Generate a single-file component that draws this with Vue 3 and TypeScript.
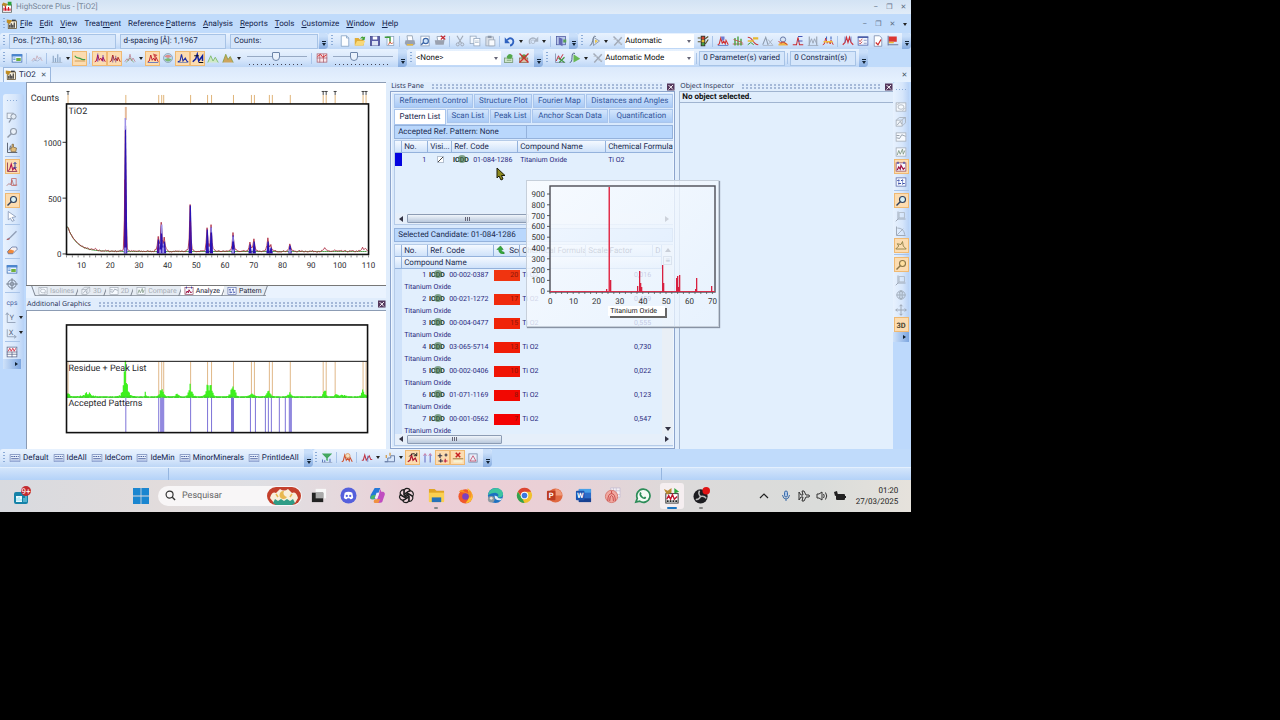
<script setup lang="ts">
import { h, ref, type FunctionalComponent } from 'vue'

const line = (d: string, c: string, w = 1) => `<path d="${d}" fill="none" stroke="${c}" stroke-width="${w}"/>`
const fill = (d: string, c: string) => `<path d="${d}" fill="${c}"/>`
const box = (x: number, y: number, w: number, hh: number, f: string, s = 'none') =>
  `<rect x="${x}" y="${y}" width="${w}" height="${hh}" fill="${f}" stroke="${s}"/>`
const dot = (x: number, y: number, r: number, f: string, s = 'none', w = 1) =>
  `<circle cx="${x}" cy="${y}" r="${r}" fill="${f}" stroke="${s}" stroke-width="${w}"/>`

const zig = 'M1 13L3 12L5 4L7 11L9 8L11 12L12 7L15 13'
const lens = (c: string, f: string) => dot(10, 6, 4, f, c, 1.5) + line('M7 9L2 14', c, 2)
const frame = (c: string) => box(1.5, 2.5, 13, 11, '#f6faff', c)

const icons: Record<string, string> = {
  app: box(2, 5, 12, 10, '#fff', '#555') + fill('M3 2L9 4L6 8L1 5Z', '#b98a2e') + fill('M9 1H14V6H9Z', '#28a23a') + line('M4 13V9M6 13V7M8 13V10M10 13V8M12 13V10', '#d01020', 1.5),
  doc: box(3, 4, 11, 10, '#f7efdc', '#5b4a28') + fill('M1 2L8 3L5 8L1 6Z', '#c08d24') + line('M5 13V9M7 13V7M9 13V9M11 13V6', '#333', 1.5) + line('M8 3H13', '#222', 1.5),
  window: box(1.5, 3.5, 13, 10, '#eaf4ff', '#3a6bb0') + box(1, 3, 14, 3, '#4a86d0') + fill('M7 8H13V12H7Z', '#6fb03c') + line('M3 8H6M3 10H6', '#4a86d0'),
  faint: line('M1 12L4 8L6 12L8 5L10 9L12 7L15 12', '#c7a5b0') + line('M2 13L5 11L9 12L14 8', '#9fb2d0'),
  bars: line('M3 14V5M6 14V8M9 14V3M12 14V7', '#8ba6c4', 1.5) + line('M1 14H15', '#a8b8cc'),
  bg: line('M1 5C4 10 7 7 9 9S13 10 15 10', '#3f9f45', 1.5) + line('M1 12H15', '#c48a3b'),
  peakA: line(zig, '#c01040', 1.3) + line('M5 2V13M12 4V13', '#5020b0'),
  peakB: line(zig, '#b02828', 1.3) + line('M5 6V14M9 5V14', '#704090'),
  peakC: line('M1 13L4 9L6 12L8 3L10 12L12 8L15 13', '#c08c9c', 1.2) + line('M3 14L8 8L13 14', '#79a36c'),
  peakD: line(zig, '#c02030', 1.3) + line('M1 14H15', '#4060c0') + fill('M8 2L14 4L10 8Z', '#d0504d'),
  globe: dot(8, 8, 6, '#b9dcef', '#8898b0') + fill('M3 6Q8 1 13 6L8 8Z', '#db8c8c') + fill('M3 10Q8 15 13 10L8 8Z', '#7fb877'),
  peakE: line('M1 13L4 12L6 3L8 12L11 8L13 12L15 13', '#2030a8', 1.5) + line('M1 14H15', '#6878b0'),
  peakF: line('M1 13L5 9L7 3L9 12L14 5V12', '#1020a0', 2) + line('M3 5H9M9 14H15', '#101010', 1.5),
  hillA: fill('M1 14L5 5L8 12L11 7L15 14Z', '#cfe9c4') + line('M1 14L5 5L8 12L11 7L15 14', '#6fb25c'),
  hillB: fill('M1 14L5 3L8 10L11 6L15 14Z', '#cda45c') + line('M1 14L5 3L8 10L11 6L15 14', '#7d9c3d'),
  grid: box(1.5, 2.5, 13, 11, '#fbe6ea', '#a86070') + line('M1 8H15M5 3V14M10 3V14', '#a86070') + line('M2 6L6 3L9 7L14 4', '#d02020', 1.2),
  new: fill('M3 1H10L13 4V15H3Z', '#fdfeff') + line('M3 1H10L13 4V15H3ZM10 1V4H13', '#7d9cc0'),
  open: fill('M1 4H6L8 6H13V14H1Z', '#e0ad38') + fill('M4 8H15L12 14H1Z', '#f8d878') + fill('M8 5Q11 0 13 3L15 2L14 7L10 6L12 4Z', '#45a235'),
  save: box(2, 2, 12, 12, '#5a5ea8', '#404488') + box(5, 2, 6, 4, '#fff') + box(4, 8, 8, 6, '#dde4f4'),
  import: box(4, 2, 9, 12, '#fff', '#86a0bd') + line('M1 3L8 3L8 9', '#3f9d39', 2) + line('M6 13L8 9L10 12L12 10', '#cf5a3c', 1.3),
  print: fill('M4 1H11L12 8H5Z', '#fdfdff') + line('M4 1H11L12 8H5Z', '#8795a8') + fill('M2 7H14L15 12L12 14H3L1 11Z', '#99a2b0') + fill('M4 12H12V14H4Z', '#e8b93c'),
  preview: box(2.5, 1.5, 11, 13, '#fff', '#8096b3') + dot(9, 8, 3.5, '#cfe5fb', '#3c66a6', 1.5) + line('M6 10L3 13', '#3c66a6', 2),
  printX: fill('M4 2H12L13 8H5Z', '#fff') + line('M4 2H12L13 8H5Z', '#8795a8') + fill('M1 7H14L13 13H2Z', '#9aa1af') + line('M9 1L15 6M15 1L9 6', '#c62832', 1.5),
  cut: line('M4 1L10 11M12 1L6 11', '#9fa8b6', 1.5) + dot(5, 12.5, 2, 'none', '#9fa8b6', 1.3) + dot(11, 12.5, 2, 'none', '#9fa8b6', 1.3),
  copy: box(1.5, 1.5, 8, 10, '#f4f8fd', '#8fa3bc') + box(6.5, 4.5, 8, 10, '#fff', '#8fa3bc') + line('M8 8H13M8 10H13', '#a9b9cc'),
  paste: box(2.5, 2.5, 10, 12, '#d9dee6', '#97a3b4') + box(5, 1, 5, 3, '#8c98a9') + box(6.5, 6.5, 8, 8, '#f8fafd', '#97a3b4'),
  undo: line('M4 7C8 2 14 5 12 11C11 13 9 14 8 14', '#2f62c0', 2.4) + fill('M1 3V11H8Z', '#2f62c0'),
  redo: line('M12 6C8 2 1 5 4 12', '#a9b4c4', 2) + dot(8, 9, 2.5, 'none', '#a9b4c4') + fill('M15 2V9H9Z', '#a9b4c4'),
  exit: box(2, 2, 12, 11, '#b9c8ea', '#4c58a0') + fill('M5 3L10 5V15L5 12Z', '#6369b3') + fill('M11 6H15V10H11Z', '#56a052'),
  run: line('M1 14Q4 14 5 7T9 2', '#68758a', 1.3) + line('M6 3V14L14 8Z', '#7b879c') + fill('M8 6L12 8L8 11Z', '#e8c54f'),
  runG: line('M1 14Q4 14 4 7T8 2', '#51618a', 1.3) + fill('M6 3L15 9L6 14Z', '#69b855'),
  cancel: line('M2 2L13 13M13 3L3 14', '#a3abb8', 2) + line('M2 6H7M8 11H14', '#c1c8d2'),
  traffic: box(5, 1, 6, 14, '#3c3c34') + dot(8, 4, 2, '#d84430') + dot(8, 8, 2, '#e8bc30') + dot(8, 12, 2, '#44a040') + line('M1 4H5M1 9H5M11 5L15 2M11 12L15 6', '#5a5228', 1.6),
  trA: line(zig, '#d03030', 1.4) + fill('M5 2H10V6L7 8Z', '#6f7cd0') + line('M1 14H15', '#5070c0'),
  trB: line('M1 12H15', '#cf3030') + line('M4 4V14M8 2V14M12 5V14', '#46a038', 1.8) + line('M2 6L14 10', '#d04040'),
  trC: line('M1 3Q5 3 8 8T15 13', '#c93636', 1.4) + fill('M1 7H9V9H1ZM8 3H15V6H8Z', '#e8b830') + line('M1 13L5 10L9 13', '#3f9d39', 1.3),
  trD: line('M1 13L5 3L8 13', '#8e9cae', 1.4) + line('M8 6L14 13M14 6L8 13', '#a8b2c0', 1.3) + line('M1 14H15', '#a8b2c0'),
  trE: fill('M2 12Q8 6 14 12V14H2Z', '#f0b548') + dot(8, 6, 3.5, '#d6e4f6', '#6576a5', 1.3) + line('M2 8L5 11L8 9L14 13', '#cc2c2c', 1.2),
  trF: line('M1 13H6L8 3L10 13H15', '#c92a30', 1.4) + line('M8 2H14M8 8H14', '#4659b8', 1.4),
  trG: line('M3 2V14M13 2V14', '#8e99a8', 1.3) + line('M3 12L6 5L8 11L10 5L13 12', '#99a4b4', 1.2) + line('M1 14H15', '#99a4b4'),
  trH: line(zig, '#d03434', 1.3) + fill('M2 8H14V10H2Z', '#f1bd3c') + line('M6 2V6M12 2V6', '#4468c0', 1.5),
  trI: line('M1 13L4 10L6 3L8 10L10 3L12 10L15 13', '#cf3038', 1.5) + line('M4 2V10M12 2V9', '#5a68b8'),
  list: box(1.5, 2.5, 13, 11, '#f2f6ff', '#4b5ea8') + box(1, 2, 14, 2, '#4b5ea8') + line('M3 7L4 9L7 5M3 11L4 12L7 9', '#c62c2c') + line('M9 7H13M9 11H13', '#7080b0'),
  report: fill('M3 1H10L13 4V15H3Z', '#fff') + line('M3 1H10L13 4V15H3Z', '#7284a8') + line('M5 10L8 13L12 6', '#cf2c2c', 1.6),
  flag: fill('M2 2H13V9H2Z', '#dc3530') + fill('M2 9H9V11H2Z', '#efba36') + line('M1 13H15M1.500 1V14', '#6f7ca0', 1.4),
  scanX: line('M2 2V14H15', '#7a86a0') + line('M3 12L6 5L8 10L12 3', '#c62e3c', 1.3) + line('M6 8L14 14M14 7L7 14', '#3f9440', 1.5),
  tree: box(2, 8, 11, 6, '#cfe6cb', '#6e936a') + fill('M5 6Q9 0 13 5L11 9H6Z', '#53a84a') + line('M5 11H11', '#6e936a'),
  treeX: box(2, 8, 11, 6, '#d8c0a8', '#8a6b50') + fill('M4 5Q8 1 12 5L10 9H5Z', '#62984a') + line('M2 2L14 14M14 2L2 14', '#cc3030', 1.8),
  zoomFit: box(1.5, 1.5, 8, 7, '#eef4fb', '#8a95a5') + dot(10, 6, 3.5, '#e4ecf5', '#8a95a5', 1.3) + line('M7 9L4 14', '#8a95a5', 1.8),
  zoomG: lens('#8d98a8', '#eaf1f9'),
  zoomB: lens('#2e3f5c', '#d8f0f4'),
  zoomO: lens('#8d7748', '#ffdf9e'),
  hand: line('M2 1V14H15', '#5c6678', 1.3) + line('M4 11L6 5L7 9', '#5c6678') + fill('M7 13L6 8L8 8V3H10V7L14 8L13 13Z', '#e2bc78') + line('M7 13L6 8L8 8V3H10V7L14 8L13 13Z', '#7c6540'),
  peakUp: line('M2 2V14H15', '#7b2048') + line('M3 13L5 11L7 4L9 12L11 9L14 13', '#b01050', 1.4) + line('M12 2V10M10 4L12 2L14 4M10 8L12 10L14 8', '#2030a0', 1.2),
  peakBox: line('M1 13L4 10L6 12L8 5L10 12L15 12', '#b07a80', 1.2) + box(7.5, 3.5, 6, 9, 'none', '#c46460'),
  pointer: fill('M3 2L13 9L8 10L11 14L8 15L6 11L3 13Z', '#fff') + line('M3 2L13 9L8 10L11 14L8 15L6 11L3 13Z', '#7c8fb0'),
  pencil: line('M2 14L6 11L14 3', '#92a0b8', 2) + line('M1 14L5 13', '#b04a4a', 1.3),
  eraser: fill('M2 10L8 4L14 4L15 7L9 13L3 13Z', '#f8f0f0') + fill('M2 10L5 7L11 9L9 13H3Z', '#ef8a3c') + line('M2 10L8 4H14L15 7L9 13H3Z', '#5c6e98'),
  target: dot(8, 8, 5.5, 'none', '#6d7888', 1.3) + dot(8, 8, 2.5, 'none', '#6d7888') + line('M8 0V16M0 8H16', '#6d7888'),
  cps: '<text x="8" y="11" text-anchor="middle" font-size="9" fill="#4760a0">cps</text>',
  yAxis: line('M3 2V14H14M1 4L3 1L5 4', '#8290a8') + '<text x="6" y="11" font-size="10" fill="#5c6a84">Y</text>',
  xAxis: line('M3 3V13H14M12 11L15 13L12 15', '#8290a8') + '<text x="5" y="11" font-size="10" fill="#5c6a84">X</text>',
  table: box(1.5, 1.5, 13, 13, '#fff', '#5a6488') + line('M1 8H15M1 11H15M8 8V15', '#5a6488') + line('M3 7L5 3L7 7L9 3L11 7L13 3', '#d03048', 1.2),
  iso: frame('#a0a8b2') + `<ellipse cx="8" cy="8" rx="4" ry="3" fill="none" stroke="#a0a8b2"/>` + line('M3 5L6 3M10 13L14 9', '#a0a8b2'),
  d3: box(1.5, 5.5, 8, 8, '#f1f5fa', '#a0a8b2') + line('M2 5L6 2H14V9L10 13M9 5L14 2', '#a0a8b2') + line('M3 12L7 7L9 11', '#8e98a6'),
  d2: frame('#a0a8b2') + line('M2 9L6 10L9 5L14 7M2 6H6', '#8e98a6', 1.2),
  compare: frame('#a0a8b2') + line('M3 12L5 6L7 11L10 4L11 11L13 6', '#8aa08e', 1.3),
  analyze: frame('#8d4058') + line('M3 12L5 8L7 11L8 6L11 11L13 9', '#a01040', 1.6) + line('M4 1V4M12 1V4', '#3440b0', 1.5),
  pattern: frame('#5968a8') + line('M3 6H6M8 6H11M4 10H8M10 10H13', '#3548a8', 1.6) + line('M5 4V12M10 4V12', '#7080c0'),
  axes3: line('M4 2V12H14M4 12L1 15', '#97a2b0', 1.2) + box(5.5, 3.5, 7, 7, 'none', '#a9b3bf'),
  axesC: line('M2 2V14H14', '#97a2b0', 1.2) + line('M3 4Q12 4 13 13M3 13L11 5', '#97a2b0'),
  star: line('M1 12L5 8L3 5L8 6L10 2L11 8L15 12H8Z', '#8f8046', 1.2),
  earth: dot(8, 8, 5.5, 'none', '#9aa5b2', 1.2) + `<ellipse cx="8" cy="8" rx="2.5" ry="5.5" fill="none" stroke="#9aa5b2"/>` + line('M2 8H14M8 2V14', '#9aa5b2'),
  move: line('M8 1V15M1 8H15M6 3L8 1L10 3M6 13L8 15L10 13M3 6L1 8L3 10M13 6L15 8L13 10', '#98a3b1', 1.2),
  txt3d: '<text x="8" y="12" text-anchor="middle" font-size="10" font-weight="bold" fill="#4c4630">3D</text>',
  batch: box(1.5, 3.5, 13, 9, '#e6effc', '#7488b8') + line('M3 6H5M6 6H8M9 6H11M12 6H13M3 9H13', '#4f64a0', 1.5) + box(2, 11, 12, 2, '#9db1dc'),
  filter: fill('M1 2H15L9 8V12L7 11V8Z', '#45a860') + line('M2 14V10M5 14V11M12 14V9', '#5b78b8', 1.4) + line('M1 14H15', '#9aa8c4'),
  match: line(zig, '#d0502c', 1.4) + dot(9, 5, 3, '#f3e0c0', '#d88a50'),
  redPk: line('M1 11H3L5 4L7 11L9 8L11 5L13 10H15', '#c03848', 1.4) + line('M9 5V13', '#5060b0'),
  steps: line('M1 13H5V8H9V5H14V13Z', '#6b7fa8', 1.3) + line('M3 4V8M8 1V5', '#d09030', 1.5),
  peakOn: line('M1 13L4 11L6 4L8 11L11 8L13 13', '#b01830', 1.6) + line('M3 6Q8 -1 13 5M13 1V5H9', '#202020', 1.3),
  twin: line('M4 3V14M11 3V14', '#7d88d0', 1.8) + line('M2 5L4 2L6 5M9 5L11 2L13 5', '#d078a0', 1.2),
  plusOn: line('M4 2V8M1 5H7M12 2V6M10 4H14M5 9V14M2 12H8', '#303048', 1.5) + line('M11 9V14M9 12H14', '#c02040', 1.5),
  xOn: line('M5 1L11 7M11 1L5 7', '#c82020', 2) + line('M1 9H15', '#806020') + fill('M2 11H14V14H2Z', '#f8f2d0'),
  shapes: box(2.5, 2.5, 11, 11, '#e7edf8', '#7180a0') + line('M4 12L8 5L12 12Z', '#c04060'),
  close: box(0, 1, 15, 14, '#54385c') + line('M3 4L12 13M12 4L3 13', '#f4e8f2', 2) + line('M6 8H10', '#fff', 2),
}

const Ico: FunctionalComponent<{ n: string }> = (p) =>
  h('svg', { class: 'ico', viewBox: '0 0 16 16', 'aria-hidden': 'true', innerHTML: icons[p.n] })
Ico.props = ['n']

/* Toolbar strings: "|" separator, "v" drop-down arrow, trailing "*" pressed state. */
const parse = (s: string) =>
  s.split(' ').map((t) => ({ kind: t === '|' ? 'sep' : t === 'v' ? 'drop' : 'btn', n: t.replace('*', ''), on: t.endsWith('*') }))

const fileTools = parse('new open save import | print preview printX | cut copy paste | undo v redo v | exit')
const treatTools = parse('trA trB trC trD trE trF trG trH | trI list report flag')
const viewTools = parse('window | faint | bars v bg* | peakA* peakB* peakC v peakD* globe peakE* peakF* hillA hillB v')
const searchTools = parse('filter | match | redPk v steps v peakOn* twin plusOn* xOn* shapes')
const leftTools = parse('zoomFit zoomG hand | peakUp* peakBox | zoomB* pointer | pencil eraser | window target | cps yAxis xAxis | table')
const rightTools = parse('iso d3 d2 compare analyze* pattern | zoomB* axes3 axesC star* | zoomO* axes3 earth move txt3d*')

const menus = [
  ['', 'F', 'ile'], ['', 'E', 'dit'], ['', 'V', 'iew'], ['Treat', 'm', 'ent'], ['Reference ', 'P', 'atterns'], ['', 'A', 'nalysis'],
  ['', 'R', 'eports'], ['', 'T', 'ools'], ['', 'C', 'ustomize'], ['', 'W', 'indow'], ['', 'H', 'elp'],
]
const batches = ['Default', 'IdeAll', 'IdeCom', 'IdeMin', 'MinorMinerals', 'PrintIdeAll']
const graphTabs = [
  { t: 'Isolines', i: 'iso', off: true }, { t: '3D', i: 'd3', off: true }, { t: '2D', i: 'd2', off: true },
  { t: 'Compare', i: 'compare', off: true }, { t: 'Analyze', i: 'analyze', off: false }, { t: 'Pattern', i: 'pattern', off: false },
]
const tabsTop = ['Refinement Control', 'Structure Plot', 'Fourier Map', 'Distances and Angles']
const tabsLow = ['Pattern List', 'Scan List', 'Peak List', 'Anchor Scan Data', 'Quantification']
const activeTab = ref('Pattern List')

const candidates = [
  { code: '00-002-0387', score: 20, scale: '0,016', c: '#f03410' },
  { code: '00-021-1272', score: 17, scale: '0,459', c: '#f02a0c' },
  { code: '00-004-0477', score: 15, scale: '0,555', c: '#f02408' },
  { code: '03-065-5714', score: 13, scale: '0,730', c: '#f01c06' },
  { code: '00-002-0406', score: 10, scale: '0,022', c: '#f01404' },
  { code: '01-071-1169', score: 8, scale: '0,123', c: '#f20802' },
  { code: '00-001-0562', score: 7, scale: '0,547', c: '#f40202' },
]

const peaks: [number, number][] = [
  [125, 126], [158, 12], [161, 26], [164, 10], [190, 46], [207, 22], [211, 24], [233, 16], [250, 7], [254, 10],
  [268, 10], [271, 4], [290, 6],
]
const marks = [67, 125, 158, 161, 163, 190, 207, 211, 233, 251, 254, 269, 272, 290, 323, 326, 335, 363, 366]
const arrows = [67, 323, 326, 335, 363, 366]
const minor = Array.from({ length: 53 }, (_, i) => 66 + (i * 303) / 52)
const patternLines = [125, 158, 160, 161, 162, 163, 190, 207, 211, 231, 232, 233, 250, 255, 265, 268, 271, 279, 285, 289, 290, 291]

let seed = 7
const rnd = () => (seed = (seed * 16807) % 2147483647) / 2147483647

const bumps = [...peaks, [95, 1], [325, 3], [335, 1], [363, 3], [366, 2]] as [number, number][]
const bell = (x: number, c: number, w: number) => Math.exp(-((x - c) ** 2) / w)
const base = (x: number) => 252 - 25 * Math.exp(-(x - 67) / 9)
const scan = Array.from({ length: 302 }, (_, i) => {
  const x = 67 + i
  const y = base(x) - bumps.reduce((s, [c, a]) => s + a * 0.94 * bell(x, c, 0.7) + Math.min(a, 10) * 0.3 * bell(x, c, 9), 0)
  return `${x} ${(y - rnd() * 1.6 + 0.6).toFixed(1)}`
})
const scanPath = 'M' + scan.join('L')
const basePath = 'M' + Array.from({ length: 151 }, (_, i) => `${67 + i * 2} ${base(67 + i * 2).toFixed(1)}`).join('L')

const residues: [number, number, number][] = [
  [68, 4, 4], [87, 4, 24], [125, 34, 1.5], [125, 12, 14], [145, 4, 0.5], [161, 8, 8], [177, 3, 5], [190, 22, 0.8], [190, 7, 8],
  [207, 12, 5], [211, 11, 5], [233, 10, 9], [252, 3, 10], [269, 7, 7], [290, 4, 6], [325, 7, 3], [337, 2, 6], [343, 2, 8], [363, 8, 3], [367, 3, 6],
]
const residuePath = Array.from({ length: 302 }, (_, i) => {
  const x = 67 + i
  const a = residues.reduce((s, [c, m, w]) => s + m * bell(x, c, w), 0.6)
  return `M${x} 398V${(397 - Math.min(36, a * (0.4 + rnd() * 0.7))).toFixed(1)}`
}).join('')

const stems = [
  [606, 289], [610, 280], [637, 286], [639, 271], [640, 283], [641, 287], [662, 265], [663, 283], [676, 278], [677, 276], [679, 275], [678, 287],
  [695, 289], [696, 278], [711, 286],
]
</script>

<template>
  <div class="desktop">
    <header class="title"><Ico n="app" /><span>HighScore Plus - [TiO2]</span>
      <div class="winbtns"><button aria-label="Minimize">–</button><button aria-label="Restore">❐</button><button aria-label="Close">✕</button></div>
    </header>

    <nav class="menu">
      <i class="grip"></i><Ico n="doc" />
      <button v-for="m in menus" :key="m[2]">{{ m[0] }}<u>{{ m[1] }}</u>{{ m[2] }}</button>
      <div class="winbtns"><button aria-label="Minimize document">–</button><button aria-label="Restore document">❐</button><button aria-label="Close document">✕</button><i class="arr"></i></div>
    </nav>

    <div class="bars bars1">
      <div class="tb readouts"><i class="grip"></i><span>Pos. [°2Th.]: 80,136</span><span>d-spacing [Å]: 1,1967</span><span>Counts:</span><i class="more"></i></div>
      <div class="tb"><i class="grip"></i>
        <template v-for="(t, k) in fileTools" :key="k">
          <i v-if="t.kind === 'sep'" class="sep"></i><button v-else-if="t.kind === 'drop'" class="drop" aria-label="More options"><i class="arr"></i></button>
          <button v-else class="tool" :class="{ on: t.on }" :aria-label="t.n"><Ico :n="t.n" /></button>
        </template><i class="more"></i>
      </div>
      <div class="tb"><i class="grip"></i>
        <button class="tool" aria-label="Run"><Ico n="run" /></button><button class="drop" aria-label="Run options"><i class="arr"></i></button>
        <button class="tool" aria-label="Cancel"><Ico n="cancel" /></button>
        <div class="combo auto"><select aria-label="Scheme"><option>Automatic</option></select><i class="arr"></i></div>
        <button class="tool" aria-label="Status"><Ico n="traffic" /></button><i class="sep"></i>
        <template v-for="(t, k) in treatTools" :key="k">
          <i v-if="t.kind === 'sep'" class="sep"></i>
          <button v-else class="tool" :aria-label="t.n"><Ico :n="t.n" /></button>
        </template><i class="more"></i>
      </div>
    </div>

    <div class="bars bars2">
      <div class="tb"><i class="grip"></i>
        <template v-for="(t, k) in viewTools" :key="k">
          <i v-if="t.kind === 'sep'" class="sep"></i><button v-else-if="t.kind === 'drop'" class="drop" aria-label="More options"><i class="arr"></i></button>
          <button v-else class="tool" :class="{ on: t.on }" :aria-label="t.n"><Ico :n="t.n" /></button>
        </template>
        <div class="slide"><input type="range" min="0" max="100" value="48" aria-label="Peak level" /></div>
        <i class="sep"></i><button class="tool" aria-label="Grid"><Ico n="grid" /></button>
        <div class="slide"><input type="range" min="0" max="100" value="32" aria-label="Grid level" /></div><i class="more"></i>
      </div>
      <div class="tb"><i class="grip"></i>
        <div class="combo none"><select aria-label="Desktop"><option>&lt;None&gt;</option></select><i class="arr"></i></div>
        <button class="tool" aria-label="Load"><Ico n="tree" /></button><button class="tool" aria-label="Remove"><Ico n="treeX" /></button><i class="more"></i>
      </div>
      <div class="tb short"><i class="grip"></i>
        <button class="tool" aria-label="Reset fit"><Ico n="scanX" /></button><button class="tool" aria-label="Start fit"><Ico n="runG" /></button>
        <button class="drop" aria-label="Fit options"><i class="arr"></i></button><button class="tool" aria-label="Stop fit"><Ico n="cancel" /></button>
        <div class="combo mode"><select aria-label="Fit mode"><option>Automatic Mode</option></select><i class="arr"></i></div><i class="sep"></i>
        <span class="info wide">0 Parameter(s) varied</span><i class="sep"></i><span class="info">0 Constraint(s)</span><i class="more"></i>
      </div>
    </div>

    <div class="docs"><div class="doc"><Ico n="doc" /><span>TiO2</span><button aria-label="Close TiO2">✕</button></div><button class="docx" aria-label="Close view">✕</button></div>

    <main class="main">
      <aside class="rail"><div class="strip left"><i class="hgrip"></i>
        <template v-for="(t, k) in leftTools" :key="k">
          <i v-if="t.kind === 'sep'" class="hsep"></i>
          <button v-else class="tool" :class="{ on: t.on, dd: t.n.endsWith('Axis') }" :aria-label="t.n"><Ico :n="t.n" /><i v-if="t.n.endsWith('Axis')" class="arr"></i></button>
        </template><i class="end"></i></div>
      </aside>

      <section class="graphs">
        <div class="paper big">
          <svg viewBox="27 83 359 203" role="img" aria-label="Scan of TiO2">
            <g class="lbl"><text x="30" y="101">Counts</text><text x="68" y="114">TiO2</text></g>
            <g class="lbl end-a"><text x="61" y="146">1000</text><text x="61" y="202">500</text><text x="61" y="258">0</text></g>
            <g class="lbl mid"><text v-for="n in 11" :key="n" :x="52.2 + n * 28.8" y="269">{{ n * 10 }}</text></g>
            <path d="M62 142.5H66M62 198.5H66M62 254.5H66" stroke="#333" />
            <path v-for="x in minor" :key="x" :d="`M${x} 256V258`" stroke="#555" stroke-width=".7" />
            <path v-for="m in marks" :key="m" :d="`M${m + 0.5} 95V104`" stroke="#e0b478" />
            <path v-for="a in arrows" :key="a" :d="`M${a - 1} 91.500H${a + 2}M${a + 0.5} 91V95`" stroke="#444" />
            <path d="M125.5 107V120" stroke="#e6bc9c" stroke-width="2" />
            <path :d="basePath" fill="none" stroke="#4b9a44" />
            <path :d="scanPath" fill="none" stroke="#a81c34" stroke-width=".8" />
            <path v-for="p in peaks" :key="p[0]" :d="`M${p[0] - 1.5} 254L${p[0] - 0.4} ${252 - p[1]}H${p[0] + 0.8}L${p[0] + 2} 254Z`" fill="#2a12b4" />
            <path d="M125 118V130M161.500 225V234M211 228V233M233 237V242" stroke="#9c8fe6" stroke-width="1.500" />
            <path d="M125 248V254M160 250V254M163 248V254M233 250V254M290 250V254" stroke="#9c8fe6" stroke-width="2" />
            <path d="M124.500 180V248M158 245V253M190 222V252" stroke="#8a0c68" stroke-width=".7" />
            <rect x="66" y="104" width="303" height="151" fill="none" stroke="#111" stroke-width="1.6" />
          </svg>
        </div>
        <div class="gtabs">
          <button v-for="g in graphTabs" :key="g.t" :class="{ off: g.off, cur: g.t === 'Analyze' }"><Ico :n="g.i" />{{ g.t }}</button>
        </div>
        <div class="cap"><span>Additional Graphics</span><i class="dots"></i><button aria-label="Close graphics"><Ico n="close" /></button></div>
        <div class="paper low">
          <svg viewBox="27 311 359 138" role="img" aria-label="Residue and accepted patterns">
            <path v-for="m in marks" :key="m" :d="`M${m + 0.5} 362V397`" stroke="#e0b888" />
            <path :d="residuePath" stroke="#3ef01e" stroke-width="1.2" />
            <path d="M66 397.5H368" stroke="#35c02a" stroke-dasharray="5 1" />
            <path v-for="m in patternLines" :key="m" :d="`M${m + 0.5} 398V433`" stroke="#7c72d8" />
            <path d="M66 361.5H368" stroke="#111" />
            <rect x="66" y="325" width="302" height="108" fill="none" stroke="#111" stroke-width="1.6" />
            <g class="lbl"><text x="68" y="371">Residue + Peak List</text><text x="68" y="406">Accepted Patterns</text></g>
          </svg>
        </div>
      </section>

      <section class="lists">
        <div class="cap"><span>Lists Pane</span><i class="dots"></i><button aria-label="Close lists"><Ico n="close" /></button></div>
        <div class="pane">
          <div class="tabs top"><button v-for="t in tabsTop" :key="t" :class="{ cur: t === activeTab }" @click="activeTab = t">{{ t }}</button></div>
          <div class="tabs low"><button v-for="t in tabsLow" :key="t" :class="{ cur: t === activeTab }" @click="activeTab = t">{{ t }}</button></div>
          <div class="band"><span>Accepted Ref. Pattern: None</span></div>
          <div class="holder first">
            <table>
              <colgroup><col class="g" /><col class="w27" /><col class="w24" /><col class="w66" /><col class="w88" /><col /></colgroup>
              <thead><tr><th></th><th>No.</th><th>Visi...</th><th>Ref. Code</th><th>Compound Name</th><th class="last">Chemical Formula</th></tr></thead>
              <tbody><tr><td class="sel"></td><td class="r">1</td><td class="c"><input type="checkbox" checked aria-label="Visible" /></td>
                <td class="code"><svg class="icdd" viewBox="0 0 17 8"><text x="0" y="7">ICDD</text><ellipse cx="9" cy="4" rx="4" ry="4" /></svg>01-084-1286</td>
                <td>Titanium Oxide</td><td>Ti O2</td></tr></tbody>
            </table>
            <div class="hs"><i class="la"></i><i class="thumb t1"></i><i class="ra"></i></div>
          </div>
          <div class="band second"><span>Selected Candidate: 01-084-1286</span></div>
          <div class="holder rest">
            <div class="scroller">
              <table class="cand">
                <colgroup><col class="g" /><col class="w27" /><col class="w66" /><col class="w26" /><col class="w66" /><col class="w67" /><col /></colgroup>
                <thead><tr><th></th><th>No.</th><th>Ref. Code</th><th class="score-h"><svg viewBox="0 0 10 10"><path d="M1 5L5 1L8 5H6Q6 8 9 8V10Q3 10 3 5Z" fill="#35a838" stroke="#1a7a26" stroke-width=".6" /></svg>Score</th><th>Chemical Formula</th><th>Scale Factor</th><th>D</th></tr>
                  <tr><th></th><th colspan="6" class="plain">Compound Name</th></tr></thead>
                <tbody v-for="(c, k) in candidates" :key="c.code">
                  <tr><td class="gut"></td><td class="r">{{ k + 1 }}</td>
                    <td class="code"><svg class="icdd" viewBox="0 0 17 8"><text x="0" y="7">ICDD</text><ellipse cx="9" cy="4" rx="4" ry="4" /></svg>{{ c.code }}</td>
                    <td class="score" :style="{ backgroundColor: c.c }">{{ c.score }}</td><td>Ti O2</td><td class="r">{{ c.scale }}</td><td></td></tr>
                  <tr><td class="gut"></td><td colspan="6">Titanium Oxide</td></tr>
                </tbody>
              </table>
              <div class="vs"><i class="ua"></i><i class="vthumb">≡</i><i class="da"></i></div>
            </div>
            <div class="hs"><i class="la"></i><i class="thumb t2"></i><i class="ra"></i></div>
          </div>
        </div>
        <svg class="cursor" viewBox="0 0 10 14" aria-hidden="true"><path d="M1 1V11L3 9L5 13L7 12L5.500 8.500H9Z" fill="#8d8a20" stroke="#1c1c08" /></svg>
        <div class="popup">
          <svg viewBox="526 180 193 147" role="img" aria-label="Stick pattern of Titanium Oxide">
            <g class="tick end-a"><text v-for="n in 10" :key="n" x="545" :y="305 - n * 10.8">{{ (n - 1) * 100 }}</text></g>
            <g class="tick mid"><text v-for="n in 8" :key="n" :x="527 + n * 23.2" y="304">{{ (n - 1) * 10 }}</text></g>
            <path v-for="n in 10" :key="n" :d="`M547 ${302 - n * 10.8}H550`" stroke="#555" />
            <path v-for="n in 29" :key="n" :d="`M${544.2 + n * 5.8} 292V294`" stroke="#777" />
            <rect x="550" y="186" width="165" height="106" fill="none" stroke="#4c4c54" stroke-width="1.4" />
            <path d="M550 291.500H715" stroke="#d8304c" fill="none" />
            <rect x="608.500" y="187" width="1.500" height="105" fill="#e2304c" />
            <rect v-for="s in stems" :key="s[0]" :x="s[0]" :y="s[1]" width="1.300" :height="292 - s[1]" fill="#d82040" />
          </svg>
          <span class="tip">Titanium Oxide</span>
        </div>
      </section>

      <section class="inspector">
        <div class="cap"><span>Object Inspector</span><i class="dots"></i><button aria-label="Close inspector"><Ico n="close" /></button></div>
        <div class="none-sel">No object selected.</div>
        <div class="blank"></div>
      </section>

      <aside class="rail"><div class="strip right"><i class="hgrip"></i>
        <template v-for="(t, k) in rightTools" :key="k">
          <i v-if="t.kind === 'sep'" class="hsep"></i>
          <button v-else class="tool" :class="{ on: t.on }" :aria-label="t.n"><Ico :n="t.n" /></button>
        </template><i class="end"></i></div>
      </aside>
    </main>

    <div class="bars bars3">
      <div class="tb"><i class="grip"></i><button v-for="b in batches" :key="b" class="batch"><Ico n="batch" />{{ b }}</button><i class="more"></i></div>
      <div class="tb"><i class="grip"></i>
        <template v-for="(t, k) in searchTools" :key="k">
          <i v-if="t.kind === 'sep'" class="sep"></i><button v-else-if="t.kind === 'drop'" class="drop" aria-label="More options"><i class="arr"></i></button>
          <button v-else class="tool" :class="{ on: t.on }" :aria-label="t.n"><Ico :n="t.n" /></button>
        </template><i class="more"></i>
      </div>
    </div>

    <footer class="status"><i></i><i></i><i></i></footer>

    <div class="taskbar">
      <button class="widget" aria-label="Widgets"><svg viewBox="0 0 20 20"><rect x="2" y="6" width="14" height="12" rx="2" fill="#1482a8" /><path d="M4 10H10V16H4Z" fill="#e8f8fc" /><path d="M5 15V12M7 15V11M9 15V13M12 16V12M14 16V10" stroke="#8fe0f0" /><circle cx="14" cy="5" r="5" fill="#c42b30" /><text x="14" y="8" text-anchor="middle" font-size="8" fill="#fff">9+</text></svg></button>
      <button class="start" aria-label="Start"><svg viewBox="0 0 16 16"><path d="M0 0H7.600V7.600H0ZM8.400 0H16V7.600H8.400ZM0 8.400H7.600V16H0ZM8.400 8.400H16V16H8.400Z" fill="#1b86d0" /></svg></button>
      <label class="search"><svg class="mag" viewBox="0 0 12 12"><circle cx="5" cy="5" r="3.800" fill="none" stroke="#333" stroke-width="1.300" /><path d="M8 8L11 11" stroke="#333" stroke-width="1.500" /></svg>
        <input type="text" placeholder="Pesquisar" aria-label="Pesquisar" />
        <svg class="deco" viewBox="0 0 34 18"><rect width="34" height="18" rx="9" fill="#c4402c" /><path d="M3 11Q5 4 9 6L13 2Q17 5 21 2L25 6Q29 4 31 11L28 16H7Z" fill="#f8efdc" /><path d="M17 4A4 4 0 1 0 20 10A4 4 0 0 1 17 4Z" fill="#e8b850" /><path d="M6 16L8 12L11 14L14 12L17 14L20 12L23 14L26 12L28 16L25 18H9Z" fill="#2f9c86" /><path d="M9 7L11 10M25 7L23 10" stroke="#e8b850" stroke-width="1.500" /></svg>
      </label>
      <div class="apps">
        <button aria-label="Task view"><svg viewBox="0 0 18 18"><rect x="6" y="2" width="11" height="10" fill="#f8f8f8" /><rect x="2" y="6" width="12" height="10" fill="#222" /><rect x="6" y="6" width="8" height="6" fill="#aaa" /></svg></button>
        <button aria-label="Discord"><svg viewBox="0 0 18 18"><circle cx="9" cy="9" r="8.500" fill="#5560dc" /><path d="M5 6Q9 4 13 6L14 11Q13 13 11 13L10 12H8L7 13Q5 13 4 11Z" fill="#fff" /><circle cx="7.200" cy="9.500" r="1.200" fill="#5560dc" /><circle cx="10.800" cy="9.500" r="1.200" fill="#5560dc" /></svg></button>
        <button aria-label="Copilot"><svg viewBox="0 0 18 18"><path d="M6 1H12L9 9L6 13H3Q0 13 2 8Z" fill="#2478d8" /><path d="M3 9L8 8L5 13H3Q0 12 3 9Z" fill="#48b868" /><path d="M12 2L13 5H15Q18 6 16 10L14 16Q13 17 7 17L10 9Z" fill="#c04cc0" /><path d="M6 13H12L10 17H6Q4 16 6 13Z" fill="#f09040" /><path d="M8 6H11L9 12H6Z" fill="#f5e8f8" /></svg></button>
        <button aria-label="ChatGPT"><svg viewBox="0 0 18 18"><g fill="none" stroke="#1c1c1c" stroke-width="1.200"><path v-for="n in 6" :key="n" d="M6.500 10.500V5Q6.500 1.500 9.500 1.500Q12 1.500 13 3.500L8.500 6.200V9" :transform="`rotate(${n * 60} 9 9)`" /></g></svg></button>
        <button class="live" aria-label="File Explorer"><svg viewBox="0 0 18 18"><path d="M1 2H7L9 4H17V15H1Z" fill="#e0a424" /><path d="M1 6H17V16H1Z" fill="#fbd050" /><path d="M4 11H14V16H4Z" fill="#2672b8" /></svg></button>
        <button aria-label="Firefox"><svg viewBox="0 0 18 18"><circle cx="9" cy="10" r="7.500" fill="#f0582c" /><path d="M11 1Q17 5 16.500 11Q15 17 9 17Q15 12 11 1Z" fill="#fbc02c" /><path d="M2 5Q5 1 8 5L13 7Q12 3 14 4Q17 8 14 12L9 6Z" fill="#f89028" /><circle cx="9" cy="10" r="3.500" fill="#7c40c0" /></svg></button>
        <button aria-label="Edge"><svg viewBox="0 0 18 18"><circle cx="9" cy="9" r="8" fill="#1c70c0" /><path d="M1 9Q2 1 10 1Q17 2 17 8Q16 12 11 11Q14 7 9 6Q4 6 1 9Z" fill="#3cc4a0" /><path d="M8 9Q8 15 15 14L16 12Q11 13 11 10Z" fill="#e4f0f8" /><circle cx="4.500" cy="13" r="3.500" fill="#8c98a0" /><circle cx="4.500" cy="12" r="1.400" fill="#f0e4d8" /></svg></button>
        <button aria-label="Chrome"><svg viewBox="0 0 18 18"><circle cx="9" cy="9" r="8" fill="#f0c02c" /><path d="M2 5A8 8 0 0 1 16 5H9Q6 5 5.500 9Z" fill="#dc4434" /><path d="M2 5L6.500 12L9 17A8 8 0 0 1 2 5Z" fill="#34a050" /><circle cx="9" cy="9" r="4" fill="#fff" /><circle cx="9" cy="9" r="3" fill="#3c78e0" /></svg></button>
        <button aria-label="PowerPoint"><svg viewBox="0 0 18 18"><circle cx="10" cy="9" r="7.500" fill="#e06840" /><path d="M10 2A7 7 0 0 1 17 9H10Z" fill="#f09878" /><rect x="1" y="4" width="9" height="10" rx="1" fill="#bc3c20" /><text x="5.500" y="12" text-anchor="middle" font-size="8" font-weight="bold" fill="#fff">P</text></svg></button>
        <button aria-label="Word"><svg viewBox="0 0 18 18"><rect x="4" y="2" width="13" height="14" rx="1" fill="#2c6cc8" /><path d="M4 2H17V6H4Z" fill="#48a0e8" /><path d="M4 12H17V16H4Z" fill="#184090" /><rect x="1" y="4" width="9" height="10" rx="1" fill="#1c54b0" /><text x="5.500" y="12" text-anchor="middle" font-size="8" font-weight="bold" fill="#fff">W</text></svg></button>
        <button aria-label="Diffraction viewer"><svg viewBox="0 0 18 18"><path d="M7 1H17V11H7ZM10 1V11M13 1V11M7 4H17M7 8H17" fill="#f4f0f4" stroke="#c0b8d0" stroke-width=".7" /><circle cx="8" cy="10" r="6.500" fill="#f0a8a0" stroke="#d87870" /><path d="M4 15Q4 7 8 7T12 15M6 15Q6 9 8 9T10 15M8 4V7" fill="none" stroke="#c84848" /></svg></button>
        <button aria-label="WhatsApp"><svg viewBox="0 0 18 18"><path d="M2 16L3.500 12A7 7 0 1 1 6 15Z" fill="#f4faf5" stroke="#2c8c58" stroke-width="1.800" /><path d="M6 6Q7 4 8 7L7.500 8Q9 10.500 10.500 11L11.500 10Q14 11 12 12.500Q10 13.500 7 10.500Q5 8 6 6Z" fill="#2c8c58" /></svg></button>
        <button class="active" aria-label="HighScore Plus"><svg viewBox="0 0 18 18"><rect x="3" y="7" width="13" height="10" fill="#fff" stroke="#333" /><path d="M1 2L5 4L9 1V6L4 8Z" fill="#b88830" /><path d="M12 1L17 5L12 7Z" fill="#30a840" /><path d="M4 13L6 9L8 13L10 8L12 13L15 10" fill="none" stroke="#c01830" stroke-width="1.500" /><path d="M4 15H15" stroke="#222" stroke-dasharray="2 1" stroke-width="2" /></svg></button>
        <button class="live" aria-label="OBS Studio"><svg viewBox="0 0 18 18"><circle cx="8" cy="10" r="7.500" fill="#1c1c20" /><path d="M8 10Q5 7 7 4M8 10Q12 9 14 12M8 10Q6 14 3 13" stroke="#bbb" stroke-width="1.600" fill="none" /><circle cx="14" cy="4" r="4" fill="#e01414" /></svg></button>
      </div>
      <div class="tray">
        <svg viewBox="0 0 12 12"><path d="M2 8L6 4L10 8" fill="none" stroke="#222" stroke-width="1.200" /></svg>
        <svg viewBox="0 0 12 12"><rect x="4.500" y="1" width="3" height="6" rx="1.500" fill="#a8c4e8" stroke="#3c6ca8" /><path d="M2.500 5Q3 9 6 9T9.500 5M6 9V11" fill="none" stroke="#3c6ca8" /></svg>
        <svg viewBox="0 0 12 12"><path d="M1 2L3 5H5L4 1H6L8 5H11Q12 6 11 7H8L6 11H4L5 7H3L1 10Z" fill="none" stroke="#333" /></svg>
        <svg viewBox="0 0 12 12"><path d="M1 4H3L6 2V10L3 8H1Z" fill="none" stroke="#333" /><path d="M7.500 4Q9 6 7.500 8M9.500 2.500Q12 6 9.500 9.500" fill="none" stroke="#333" /></svg>
        <svg viewBox="0 0 12 12"><rect x="2" y="4" width="9" height="6" rx="1" fill="#222" /><path d="M0 2L3 1L4 5L1 6Z" fill="#222" /><path d="M11 6H12V8H11Z" fill="#222" /></svg>
      </div>
      <div class="clock"><span>01:20</span><span>27/03/2025</span></div>
    </div>
  </div>
</template>

<style>
html, body { background: #000; }
</style>

<style scoped>
.desktop { width: 71.2vw; height: 71.1vh; min-height: 500px; display: grid; grid-template-rows: 14px 19px 16px 18px 15px 1fr 18px 13px 32px; font-family: Roboto, "Open Sans", sans-serif; text-rendering: geometricPrecision; font-size: 8px; line-height: 10px; color: #1c2c50; background: #bfdbfc; overflow: hidden; }
button { font: inherit; color: inherit; border: 0; background: none; padding: 0; margin: 0; white-space: nowrap; text-rendering: inherit; }
i { font-style: normal; display: block; flex: none; }
svg { display: block; }
.ico { width: 12px; height: 12px; flex: none; }
.arr { width: 0; height: 0; border: 2px solid transparent; border-top: 3px solid #222; border-bottom: 0; }
.title { display: flex; align-items: center; gap: 3px; padding: 0 5px 1px 1px; background: linear-gradient(#d3e3f4, #e1ecf8); color: #78889c; }
.winbtns { margin-left: auto; display: flex; align-items: center; gap: 8px; font-size: 7px; color: #5c6c84; }
.menu { display: flex; align-items: center; gap: 7px; padding: 1px 4px 0 3px; background: #c0dbfb; color: #14244c; }
.menu .ico { margin: 0 -5px 0 -6px; }
.grip { width: 2px; height: 12px; margin: 0 4px 0 3px; background: repeating-linear-gradient(#8cacd8 0 1px, transparent 1px 3px); }
.menu .grip { margin: 0; }
.bars { display: grid; background: #c0dbfb; }
.bars1 { grid-template-columns: 328fr 250fr 333fr; }
.bars2 { grid-template-columns: 407fr 136fr 368fr; }
.bars3 { grid-template-columns: 313fr 598fr; align-items: start; }
.tb { display: flex; align-items: center; background: linear-gradient(#e8f2fe, #d6e6fb 60%, #bdd6f6); border-radius: 3px; height: 100%; min-width: 0; overflow: hidden; }
.tb.short, .bars3 .tb:last-child { justify-self: start; }
.bars3 .tb:last-child .grip { margin: 0 2px; }
.tool { width: 15px; height: 15px; flex: none; display: flex; align-items: center; justify-content: center; }
.tool.on { background: #fcdcb0; box-shadow: inset 0 0 0 1px #efb973; }
.sep { width: 1px; height: 11px; margin: 0 2px; background: #a9c4e8; }
.drop { width: 8px; height: 14px; flex: none; display: flex; align-items: center; justify-content: center; }
.more { width: 9px; height: 100%; margin-left: auto; background: linear-gradient(#c9dffa 20%, #86ace0); position: relative; border-radius: 0 3px 3px 0; }
.short .more, .bars3 .tb:last-child .more { margin-left: 3px; }
.more::after { content: ""; position: absolute; left: 3px; bottom: 3px; border: 2px solid transparent; border-top: 3px solid #123; border-bottom: 0; }
.more::before { content: ""; position: absolute; left: 3px; bottom: 7px; width: 4px; height: 1px; background: #123; }
.readouts { gap: 4px; }
.readouts .grip { margin-right: 0; }
.readouts span { flex: 107 1 0; border: 1px solid #a7c3e6; background: #d5e6fb; padding: 1px 3px; height: 11px; }
.readouts span:nth-of-type(3) { flex-grow: 87; }
.readouts .more { margin-left: -3px; }
.combo { background: #fff; display: flex; align-items: center; height: 14px; padding-right: 3px; flex: none; }
.combo .arr { border-top-color: #667; }
.combo select { appearance: none; border: 0; background: none; font: inherit; color: #111; padding: 0; flex: 1; min-width: 0; text-rendering: inherit; }
.auto { width: 66px; margin-right: 1px; } .none { width: 82px; } .mode { width: 86px; }
.info { border: 1px solid #a7c3e6; background: #d5e6fb; padding: 1px 3px; height: 11px; width: 58px; }
.info.wide { width: 78px; }
.slide { width: 60px; padding: 0 2px 0 4px; flex: none; position: relative; height: 14px; }
.slide::after { content: ""; position: absolute; left: 6px; right: 4px; bottom: 0; height: 1px; background: repeating-linear-gradient(90deg, #445 0 1px, transparent 1px 4px); }
.slide input { appearance: none; width: 100%; height: 10px; margin: 0; display: block; background: linear-gradient(#98aac4, #98aac4) center / 100% 1px no-repeat; }
.slide input::-webkit-slider-thumb { appearance: none; width: 8px; height: 9px; background: #eaf2fc; border: 1px solid #6c84a8; border-radius: 1px 1px 4px 4px; }
.docs { display: flex; align-items: end; justify-content: space-between; padding: 0 4px 0 3px; background: linear-gradient(#dbe9fb, #e6f1fe); }
.doc { display: flex; align-items: center; gap: 2px; height: 14px; padding: 0 3px 0 1px; background: #eef6ff; border: 1px solid #9ab7de; border-bottom: 0; }
.doc button, .docx { font-size: 7px; color: #456; }
.doc button { margin-left: 3px; }
.docx { align-self: center; }
.main { display: grid; grid-template-columns: 26px 360fr 4px 285fr 4px 214fr 18px; min-height: 0; background: #e0edfc; }
.main > :nth-child(2) { grid-column: 2; } .main > :nth-child(3) { grid-column: 4; } .main > :nth-child(4) { grid-column: 6; } .main > :nth-child(5) { grid-column: 7; }
.rail { background: #bdd9fc; }
.strip { display: flex; flex-direction: column; align-items: center; background: linear-gradient(90deg, #e8f2fe, #d6e6fb 60%, #b8d2f6); border-radius: 3px; }
.strip.left { margin: 12px 2px 0 3px; padding-right: 3px; }
.strip.left .tool.dd { width: 100%; justify-content: flex-start; padding-left: 2px; gap: 2px; }
.strip.right { margin-right: 2px; }
.hgrip { width: 10px; height: 1px; margin: 7px 0 9px; background: repeating-linear-gradient(90deg, #8cacd8 0 1px, transparent 1px 3px); }
.strip.left .hgrip { margin-top: 6px; }
.hsep { width: 15px; height: 1px; margin: 1px 0 2px; background: #a9c4e8; }
.end { align-self: flex-end; width: 100%; height: 10px; background: linear-gradient(90deg, #cfe2fa, #7da6e0); position: relative; }
.end::after { content: ""; position: absolute; right: 3px; top: 3px; border: 2px solid transparent; border-left: 3px solid #123; border-right: 0; }
.graphs { display: grid; grid-template-rows: 204fr 13px 12px 139fr; min-height: 0; min-width: 0; }
.graphs .cap { height: 12px; }
.paper { background: #fff; border-left: 1px solid #8c9cb4; border-top: 1px solid #8c9cb4; min-height: 0; }
.paper svg { width: 100%; height: 100%; }
.lbl { font-size: 9px; fill: #2a2a2e; }
.end-a { text-anchor: end; }
.mid { text-anchor: middle; }
.lbl.mid, .lbl.end-a { font-size: 8px; }
.gtabs { display: flex; align-items: start; background: #eaf3fe; padding-left: 9px; border-top: 1px solid #777; font-size: 7px; }
.gtabs button { display: flex; align-items: center; gap: 2px; height: 10px; padding: 0 4px 0 3px; background: #e6ecf3; border-bottom: 1px solid #98a0aa; color: #1c2438; position: relative; line-height: 10px; }
.gtabs button::after { content: ""; position: absolute; right: 0; top: 0; width: 1px; height: 10px; background: #7c8490; transform: skewX(-20deg); }
.gtabs button:first-child::before { content: ""; position: absolute; left: -2px; top: 0; width: 1px; height: 10px; background: #7c8490; transform: skewX(20deg); }
.gtabs .off { color: #a6adb6; }
.gtabs .cur { background: #fff; }
.gtabs .ico { width: 10px; height: 10px; }
.cap { display: flex; align-items: center; gap: 8px; height: 9px; font-family: "Open Sans", sans-serif; font-size: 7px; line-height: 9px; padding: 0 0 0 1px; min-width: 0; }
.cap .dots { flex: 1; height: 5px; background-image: radial-gradient(circle at 1px 1px, #a5b9d8 1px, transparent 1px); background-size: 4px 3px; }
.cap .ico { width: 8px; height: 8px; }
.cap button { margin-left: -5px; }
.lists { position: relative; display: flex; flex-direction: column; min-height: 0; min-width: 0; }
.pane { flex: 1; min-height: 0; display: flex; flex-direction: column; border: 1px solid #8ca4cc; padding: 2px 1px 2px 3px; background: #d9e9fc; margin: 0; overflow: hidden; box-shadow: inset 0 0 0 1px #eef6ff; }
.tabs { display: flex; gap: 1px; height: 14px; margin-bottom: 1px; flex: none; }
.tabs button { border: 1px solid #a9c5ec; background: linear-gradient(#d4e6fc, #a9caf6); color: #33569c; text-align: center; height: 14px; }
.tabs button.cur { background: #fff; color: #14244c; height: 16px; }
.top button:nth-child(1) { flex: 80 1 0; } .top button:nth-child(2) { flex: 58 1 0; } .top button:nth-child(3) { flex: 52 1 0; } .top button:nth-child(4) { flex: 88 1 0; }
.low button:nth-child(1) { flex: 52 1 0; } .low button:nth-child(2) { flex: 42 1 0; } .low button:nth-child(3) { flex: 41 1 0; } .low button:nth-child(4) { flex: 78 1 0; } .low button:nth-child(5) { flex: 65 1 0; }
.band { height: 14px; flex: none; display: flex; background: #b9d7fc; margin-top: 1px; border: 1px solid #94b2dc; box-sizing: border-box; }
.band span { width: 132px; border-right: 1px solid #94b2dc; padding: 1px 3px; white-space: nowrap; box-sizing: border-box; }
.second { margin-top: 3px; }
.holder { border: 1px solid #b5cbe8; border-right: 0; background: #e2effd; margin-top: 1px; display: flex; flex-direction: column; min-height: 0; flex: 1; }
.holder.first { flex: 0 0 83px; }
.holder.rest { margin-top: 2px; }
table { border-collapse: separate; border-spacing: 0; table-layout: fixed; width: 100%; }
.g { width: 7px; } .w27 { width: 26px; } .w24 { width: 24px; } .w67 { width: 67px; } .w88 { width: 88px; } .w26 { width: 26px; } .w66 { width: 66px; }
th, td { box-sizing: border-box; padding: 0 2px; height: 12px; overflow: hidden; white-space: nowrap; text-align: left; font-weight: normal; line-height: 10px; }
th { background: linear-gradient(#f4f9ff, #cfe2fa); border-right: 1px solid #94b2dc; border-bottom: 1px solid #94b2dc; color: #1c2c50; }
th.last { padding-right: 0; border-right: 0; }
td { font-size: 7px; color: #26267c; }
.first td { height: 13px; }
td.r { text-align: right; } td.c { text-align: center; }
.sel { background: #0404e0; }
.gut { background: #cfe2fa; }
td.code { padding: 0 0 0 1px; }
.icdd { display: inline-block; width: 17px; height: 8px; margin-right: 3px; vertical-align: -1px; }
.icdd text { font-size: 7px; font-weight: bold; fill: #20302a; }
.icdd ellipse { fill: #4c7a50; opacity: .65; }
.c input { appearance: none; width: 7px; height: 7px; margin: 0; border: 1px solid #b4c0d0; background: linear-gradient(135deg, transparent 45%, #444 45% 60%, transparent 60%) #fff; vertical-align: middle; }
td.score { text-align: right; color: #8c1408; box-shadow: inset 0 1px #e2effd; }
.score-h svg { width: 9px; height: 9px; display: inline-block; margin-right: 4px; vertical-align: -1px; }
.hs { display: flex; align-items: center; gap: 4px; height: 11px; margin-top: auto; padding: 0 4px; background: #e6effa; flex: none; }
.la { border: 3px solid transparent; border-right: 4px solid #334; border-left: 0; }
.ra { border: 3px solid transparent; border-left: 4px solid #334; border-right: 0; margin-left: auto; }
.thumb { height: 9px; border: 1px solid #8c9cb4; border-radius: 1px; box-sizing: border-box; background: linear-gradient(90deg, #667 0 1px, transparent 1px 2px, #667 2px 3px, transparent 3px 4px, #667 4px 5px) center / 5px 4px no-repeat, linear-gradient(#f0f5fb, #b9c8dc); }
.t1 { width: 45%; } .t2 { width: 35%; }
.scroller { display: flex; flex: 1; min-height: 0; overflow: hidden; }
.cand { align-self: flex-start; flex: 1; width: 0; }
.vs { width: 11px; background: #e9eff6; display: flex; flex-direction: column; align-items: center; gap: 4px; padding: 3px 0; }
.ua { border: 3px solid transparent; border-bottom: 4px solid #334; border-top: 0; }
.da { border: 3px solid transparent; border-top: 4px solid #334; border-bottom: 0; margin-top: auto; }
.vthumb { width: 9px; height: 9px; border: 1px solid #8c9cb4; line-height: 8px; text-align: center; box-sizing: border-box; }
.cursor { position: absolute; left: 106px; top: 85px; width: 10px; height: 14px; }
.popup { position: absolute; left: 136px; top: 98px; width: 193px; height: 147px; z-index: 2; background: linear-gradient(135deg, rgba(250, 252, 255, .88), rgba(233, 243, 254, .74)); box-shadow: inset 0 0 0 1px #c6cfda, 1px 1px 1px #8893a4; }
.popup svg { width: 193px; height: 147px; }
.tick { font-size: 8px; fill: #333; }
.tip { position: absolute; left: 82px; top: 126px; padding: 0 8px 0 2px; background: #fff; color: #222; font-size: 7px; line-height: 10px; box-shadow: 2px 2px 0 #666; white-space: nowrap; }
.inspector { display: grid; grid-template-rows: 9px 12px 1fr; min-width: 0; }
.none-sel { font-weight: bold; color: #111; border: 1px solid #a0b4d0; border-right: 0; padding-left: 2px; }
.blank { border-left: 1px solid #a0b4d0; background: #e2effd; }
.batch { display: flex; align-items: center; gap: 2px; margin-right: 4px; color: #14244c; }
.status { display: grid; grid-template-columns: 168fr 493fr 250fr; border-top: 1px solid #e4f0fe; background: linear-gradient(#d3e5fb, #b4d2f8); }
.status i + i { border-left: 1px solid #96b6e0; }
.taskbar { display: flex; align-items: center; background: linear-gradient(90deg, #d8dadf, #e2dcdc 18%, #dfdfe3 28%, #e6d8dc 38%, #ecced6 46%, #ead0d6 60%, #dcdada 75%, #dadcda 90%, #e6e2dc); color: #222; }
.widget { margin-left: 12px; width: 20px; }
.widget svg { width: 20px; height: 20px; }
.start { margin-left: 101px; }
.start svg { width: 16px; height: 16px; }
.search { margin-left: 9px; width: 144px; height: 20px; border-radius: 10px; background: #f8f6f7; display: flex; align-items: center; flex: none; }
.mag { width: 11px; height: 11px; margin: 0 6px 0 7px; }
.search input { border: 0; background: none; font: inherit; font-size: 9px; flex: 1; min-width: 0; padding: 0; outline: 0; text-rendering: inherit; }
.search input::placeholder { color: #666; opacity: 1; }
.deco { width: 34px; height: 18px; margin-right: 1px; }
.apps { display: grid; grid-template-columns: repeat(14, 1fr); width: 412px; margin-left: 2px; }
.apps button { height: 26px; display: flex; align-items: center; justify-content: center; position: relative; }
.apps svg { width: 17px; height: 17px; }
.apps .live::after, .apps .active::after { content: ""; position: absolute; bottom: 0; width: 4px; height: 2px; border-radius: 1px; background: #888; }
.apps .active::after { width: 10px; background: #1c74c0; }
.apps .active { background: #f5eef0; border-radius: 3px; margin: 0 3px; }
.tray { margin-left: auto; display: flex; gap: 6px; }
.tray svg { width: 12px; height: 12px; }
.tray svg:first-child { margin-right: 4px; }
.clock { margin: 0 13px 0 10px; display: flex; flex-direction: column; text-align: right; line-height: 11px; }
</style>
